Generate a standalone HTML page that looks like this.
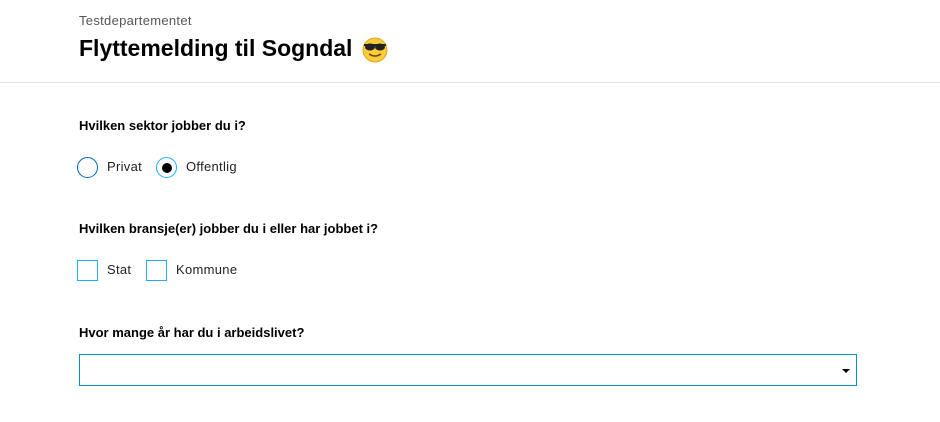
<!DOCTYPE html>
<html><head><meta charset="utf-8"><style>
body{margin:0;width:940px;height:422px;background:#fff;font-family:"Liberation Sans","DejaVu Sans",sans-serif;color:#000;position:relative;overflow:hidden}
.a{position:absolute}
.lbl{font-weight:bold;font-size:13px}
.opt{font-size:13px;color:#222;letter-spacing:.3px}
</style></head><body>
<div class="a" style="left:79px;top:13px;font-size:13px;color:#555;letter-spacing:.3px">Testdepartementet</div>
<div class="a" style="left:79px;top:35px;font-size:23px;font-weight:bold">Flyttemelding til Sogndal</div>
<svg class="a" style="left:361px;top:37px" width="28" height="26" viewBox="0 0 28 26"><circle cx="14" cy="13" r="12" fill="#f9cc3c" stroke="#e0a520"/><rect x="3" y="7" width="22" height="2" fill="#222"/><ellipse cx="9" cy="10" rx="5" ry="3.5" fill="#222"/><ellipse cx="19" cy="10" rx="5" ry="3.5" fill="#222"/><path d="M8 17 Q14 21 20 17" stroke="#6b3f00" stroke-width="1.5" fill="none"/></svg>
<div class="a" style="left:0;top:82px;width:940px;height:1px;background:#e6e6e6"></div>
<div class="a lbl" style="left:79px;top:118px">Hvilken sektor jobber du i?</div>
<div class="a" style="left:77px;top:157px;width:19px;height:19px;border:1.5px solid #0062ba;border-radius:50%"></div>
<div class="a opt" style="left:107px;top:159px">Privat</div>
<div class="a" style="left:156px;top:157px;width:19px;height:19px;border:1.5px solid #1eaef7;border-radius:50%"></div>
<div class="a" style="left:162px;top:163px;width:10px;height:10px;background:#000;border-radius:50%"></div>
<div class="a opt" style="left:186px;top:159px">Offentlig</div>
<div class="a lbl" style="left:79px;top:221px">Hvilken bransje(er) jobber du i eller har jobbet i?</div>
<div class="a" style="left:77px;top:260px;width:19px;height:19px;border:1.5px solid #1eaef7"></div>
<div class="a opt" style="left:107px;top:262px">Stat</div>
<div class="a" style="left:146px;top:260px;width:19px;height:19px;border:1.5px solid #1eaef7"></div>
<div class="a opt" style="left:176px;top:262px">Kommune</div>
<div class="a lbl" style="left:79px;top:325px">Hvor mange år har du i arbeidslivet?</div>
<div class="a" style="left:79px;top:354px;width:776px;height:30px;border:1px solid #0092d6"></div>
<div class="a" style="left:842px;top:369px;width:0;height:0;border-left:4px solid transparent;border-right:4px solid transparent;border-top:4px solid #000"></div>
</body></html>
